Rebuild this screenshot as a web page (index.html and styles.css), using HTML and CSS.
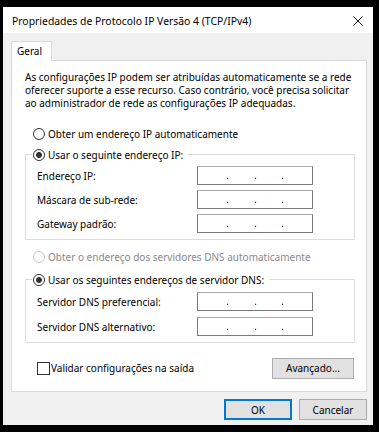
FILE: index.html
```html
<!DOCTYPE html>
<html lang="pt">
<head>
<meta charset="utf-8">
<title>Propriedades de Protocolo IP Versão 4 (TCP/IPv4)</title>
<link rel="stylesheet" href="styles.css">
</head>
<body>
<div class="window">
  <div class="titlebar">
    <span class="title">Propriedades de Protocolo IP Versão 4 (TCP/IPv4)</span>
    <svg class="close" width="10" height="10" viewBox="0 0 10 10"><path d="M0.5 0.5 L9.5 9.5 M9.5 0.5 L0.5 9.5" stroke="#1a1a1a" stroke-width="1" fill="none"/></svg>
  </div>
  <div class="content">
    <div class="tabs"><div class="tab">Geral</div></div>
    <div class="panel">
      <p class="intro">As configurações IP podem ser atribuídas automaticamente se a rede oferecer suporte a esse recurso. Caso contrário, você precisa solicitar ao administrador de rede as configurações IP adequadas.</p>

      <div class="radio-row first"><span class="radio"></span><span>Obter um endereço IP automaticamente</span></div>

      <div class="group ip">
        <div class="group-head"><span class="radio checked"></span><span>Usar o seguinte endereço IP:</span></div>
        <div class="field"><span class="label">Endereço IP:</span><span class="ipbox"><i></i><b>.</b><i></i><b>.</b><i></i><b>.</b><i></i></span></div>
        <div class="field"><span class="label">Máscara de sub-rede:</span><span class="ipbox"><i></i><b>.</b><i></i><b>.</b><i></i><b>.</b><i></i></span></div>
        <div class="field"><span class="label">Gateway padrão:</span><span class="ipbox"><i></i><b>.</b><i></i><b>.</b><i></i><b>.</b><i></i></span></div>
      </div>

      <div class="radio-row dns-auto disabled"><span class="radio"></span><span>Obter o endereço dos servidores DNS automaticamente</span></div>

      <div class="group dns">
        <div class="group-head"><span class="radio checked"></span><span>Usar os seguintes endereços de servidor DNS:</span></div>
        <div class="field"><span class="label">Servidor DNS preferencial:</span><span class="ipbox"><i></i><b>.</b><i></i><b>.</b><i></i><b>.</b><i></i></span></div>
        <div class="field"><span class="label">Servidor DNS alternativo:</span><span class="ipbox"><i></i><b>.</b><i></i><b>.</b><i></i><b>.</b><i></i></span></div>
      </div>

      <div class="bottom-row">
        <label class="check"><span class="box"></span><span>Validar configurações na saída</span></label>
        <button class="btn advanced">Avançado...</button>
      </div>
    </div>
    <div class="actions">
      <button class="btn default">OK</button>
      <button class="btn">Cancelar</button>
    </div>
  </div>
</div>
</body>
</html>
```

FILE: styles.css
```css
html, body {
  margin: 0;
  padding: 0;
  background: #000;
}
body {
  font-family: "Noto Sans", "Open Sans", sans-serif;
  font-size: 10px;
  color: #000;
  overflow: hidden;
}
.window {
  margin: 7px 6px 7px 3px;
  width: 370px;
  height: 418px;
  background: #f0f0f0;
  display: flex;
  flex-direction: column;
}
.titlebar {
  height: 26px;
  flex: none;
  background: #fff;
  display: flex;
  align-items: center;
  justify-content: space-between;
  padding: 0 10px 0 9px;
}
.title {
  font-size: 10.4px;
  line-height: 14px;
  margin-top: 1px;
}
.close { display: block; margin-top: 1px; }
.content {
  padding: 8px 6px 0 8px;
}
.tabs { display: flex; }
.tab {
  box-sizing: border-box;
  width: 41px;
  height: 20px;
  border: 1px solid #d9d9d9;
  border-bottom: none;
  background: #fff;
  position: relative;
  z-index: 1;
  margin-bottom: -1px;
  padding-left: 5px;
  line-height: 18px;
}
.panel {
  box-sizing: border-box;
  height: 332px;
  border: 1px solid #d9d9d9;
  background: #fff;
  padding-top: 10px;
}
.intro {
  margin: 0 12px 0 13px;
  line-height: 13px;
}
.radio-row {
  display: flex;
  align-items: center;
  height: 13px;
  padding-left: 21px;
  gap: 3px;
}
.radio-row.first { margin-top: 17px; }
.radio-row.dns-auto { margin-top: 10px; }
.disabled { color: #8a8a8a; }
.radio {
  box-sizing: border-box;
  width: 12px;
  height: 12px;
  flex: none;
  border: 1px solid #333;
  border-radius: 50%;
  background: #fff;
}
.disabled .radio { border-color: #c8c8c8; }
.radio.checked {
  background: radial-gradient(circle, #333 0, #333 2.6px, #fff 3.3px);
}
.group {
  border: 1px solid #dcdcdc;
  margin: 0 11px 0 13px;
  padding: 0 0 6px 11px;
}
.group.ip { margin-top: 14px; }
.group.dns { margin-top: 16px; }
.group-head {
  display: flex;
  width: fit-content;
  align-items: center;
  height: 13px;
  gap: 3px;
  margin: -7px 0 0 -5px;
  padding: 0 5px 0 1px;
  background: #fff;
}
.field {
  display: flex;
  align-items: center;
  height: 19px;
  margin-top: 5px;
}
.dns .field { margin-top: 6px; }
.label { width: 160px; flex: none; }
.ipbox {
  box-sizing: border-box;
  width: 116px;
  height: 19px;
  border: 1px solid #7a7a7a;
  border-top-color: #ababab;
  background: #fff;
  display: grid;
  grid-template-columns: 29px 2px 26px 2px 25px 2px 1fr;
  line-height: 17px;
}
.ipbox b {
  font-weight: normal;
  display: block;
  width: 2px;
  overflow: hidden;
  text-indent: -1px;
}
.bottom-row {
  display: flex;
  align-items: center;
  justify-content: space-between;
  margin: 15px 12px 0 25px;
  height: 20px;
}
.check {
  display: flex;
  align-items: center;
  gap: 1px;
}
.check .box {
  box-sizing: border-box;
  width: 13px;
  height: 13px;
  border: 1px solid #333;
  background: #fff;
}
.btn {
  box-sizing: border-box;
  font: inherit;
  color: #000;
  background: #e1e1e1;
  border: 1px solid #adadad;
  padding: 0;
  margin: 0;
}
.advanced {
  width: 82px;
  height: 21px;
}
.actions {
  display: flex;
  justify-content: flex-end;
  gap: 7px;
  margin-top: 7px;
}
.actions .btn {
  width: 68px;
  height: 21px;
}
.btn.default {
  border: 2px solid #0078d7;
}
```
